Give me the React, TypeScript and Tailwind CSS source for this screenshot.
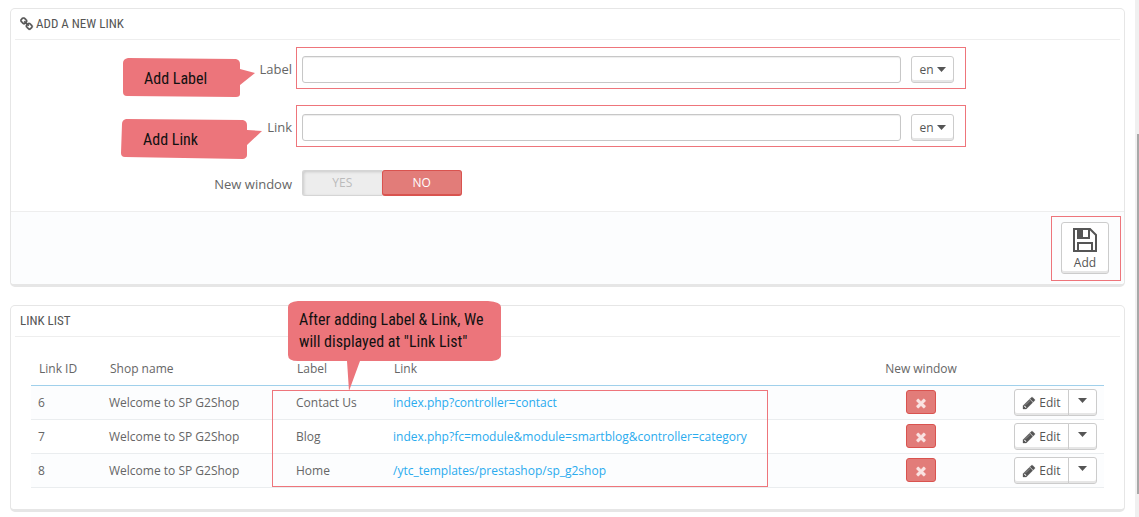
import type { ReactNode } from 'react';

const links = [
  { id: 6, shop: 'Welcome to SP G2Shop', label: 'Contact Us', url: 'index.php?controller=contact' },
  { id: 7, shop: 'Welcome to SP G2Shop', label: 'Blog', url: 'index.php?fc=module&module=smartblog&controller=category' },
  { id: 8, shop: 'Welcome to SP G2Shop', label: 'Home', url: '/ytc_templates/prestashop/sp_g2shop' },
];

const icons = {
  link: 'M1456 1216q0-40-28-68l-208-208q-28-28-68-28-42 0-72 32 3 3 19 18.5t21.5 21.5 15 19 13 25.5 3.5 27.5q0 40-28 68t-68 28q-15 0-27.5-3.5t-25.5-13-19-15-21.5-21.5-18.5-19q-33 31-33 73 0 40 28 68l206 207q27 27 68 27 40 0 68-26l147-146q28-28 28-67zm-703-705q0-40-28-68l-206-207q-28-28-68-28-39 0-68 27l-147 146q-28 28-28 67 0 40 28 68l208 208q27 27 68 27 42 0 72-31-3-3-19-18.5t-21.5-21.5-15-19-13-25.5-3.5-27.5q0-40 28-68t68-28q15 0 27.5 3.5t25.5 13 19 15 21.5 21.5 18.5 19q33-31 33-73zm895 705q0 120-85 203l-147 146q-83 83-203 83-121 0-204-85l-206-207q-83-83-83-203 0-123 88-209l-88-88q-86 88-208 88-120 0-204-84l-208-208q-84-84-84-204t85-203l147-146q83-83 203-83 121 0 204 85l206 207q83 83 83 203 0 123-88 209l88 88q86-88 208-88 120 0 204 84l208 208q84 84 84 204z',
  pencil: 'M491 1536l91-91-235-235-91 91v107h128v128h107zm523-928q0-22-22-22-10 0-17 7l-542 542q-7 7-7 17 0 22 22 22 10 0 17-7l542-542q7-7 7-17zm-54-192l416 416-832 832h-416v-416zm683 96q0 53-37 90l-166 166-416-416 166-165q36-38 90-38 53 0 91 38l235 234q37 39 37 91z',
  times: 'M1490 1322q0 40-28 68l-136 136q-28 28-68 28t-68-28l-294-294-294 294q-28 28-68 28t-68-28l-136-136q-28-28-28-68t28-68l294-294-294-294q-28-28-28-68t28-68l136-136q28-28 68-28t68 28l294 294 294-294q28-28 68-28t68 28l136 136q28 28 28 68t-28 68l-294 294 294 294q28 28 28 68z',
};

const Icon = ({ name, className }: { name: keyof typeof icons; className: string }) => (
  <svg viewBox="0 0 1792 1792" fill="currentColor" stroke="currentColor" strokeWidth="40" className={className} aria-hidden="true">
    <path d={icons[name]} />
  </svg>
);

const Caret = () => (
  <svg viewBox="0 0 9 5" fill="currentColor" className="h-[5px] w-[9px]" aria-hidden="true">
    <path d="M0 0h9L4.5 5z" />
  </svg>
);

const SaveIcon = () => (
  <svg viewBox="0 0 24 24" fill="none" stroke="currentColor" strokeWidth="2" className="size-6" aria-hidden="true">
    <path d="M1 1h16l6 6v16H1z" />
    <path d="M5 1v9h11V1M5 23v-8h14v8" />
    <path d="M5 1h5v9H5z" fill="currentColor" stroke="none" />
  </svg>
);

const Panel = ({ title, icon, children }: { title: string; icon?: ReactNode; children: ReactNode }) => (
  <section className="rounded-[5px] border border-b-[3px] border-[#e6e6e6] bg-white">
    <h2 className="mx-1 flex h-[31px] items-center gap-[2px] border-b border-[#eee] px-[5px] font-['Roboto_Condensed','Liberation_Sans',sans-serif] text-[13px] text-[#555] uppercase">
      {icon}
      {title}
    </h2>
    {children}
  </section>
);

const buttonStyle = 'border border-[#ccc] bg-white shadow-[inset_0_-2px_0_#e6e6e6] text-[#555]';
const calloutText = "absolute font-['Roboto_Condensed','Liberation_Sans',sans-serif] text-base leading-[22px] whitespace-nowrap text-[#111]";

const LangField = ({ id, label, children }: { id: string; label: string; children: ReactNode }) => (
  <div className="relative flex items-center">
    <label htmlFor={id} className="w-[281px] shrink-0 pt-[2px] text-right">{label}</label>
    <div className="mr-[158px] ml-1 flex flex-1 gap-[10px] border border-[#ee757b] pt-2 pr-[11px] pb-[5px] pl-[5px]">
      <input
        id={id}
        type="text"
        className="h-[27px] min-w-0 flex-1 rounded-[3px] border border-[#c7c7c7] bg-white px-2 shadow-[inset_0_1px_1px_rgba(0,0,0,0.075)] outline-none"
      />
      <button type="button" className={`flex h-[27px] w-[43px] items-center justify-center gap-[3px] rounded-[3px] text-xs ${buttonStyle}`}>
        en
        <Caret />
      </button>
    </div>
    {children}
  </div>
);

const AddLinkPanel = () => (
  <Panel title="Add a new link" icon={<Icon name="link" className="size-[14px]" />}>
    <form>
      <div className="flex flex-col gap-4 pt-[7px] pb-[15px]">
        <LangField id="label" label="Label">
          <div className="absolute top-[11px] left-28 h-10 w-[132px]">
            <svg viewBox="0 0 132 40" fill="#ec757b" className="size-full" aria-hidden="true">
              <path d="M5 0L113 1Q117 2 117 6V11L132 15L117 27V36Q117 39 113 39L4 38Q0 38 0 34L0 5Q0 1 5 0z" />
            </svg>
            <span className={`${calloutText} top-[10px] left-[21px]`}>Add Label</span>
          </div>
        </LangField>
        <LangField id="link" label="Link">
          <div className="absolute top-[14px] left-[110px] h-10 w-[142px]">
            <svg viewBox="0 0 142 40" fill="#ec757b" className="size-full" aria-hidden="true">
              <path d="M5 0L122 1Q126 2 126 6V11L141 12L126 26V36Q126 39 122 40L4 38Q0 38 0 34L1 5Q1 1 5 0z" />
            </svg>
            <span className={`${calloutText} top-[10px] left-[22px]`}>Add Link</span>
          </div>
        </LangField>
        <div role="radiogroup" aria-labelledby="new-window" className="flex items-center pt-[7px]">
          <span id="new-window" className="w-[281px] shrink-0 pt-[2px] text-right">New window</span>
          <div className="ml-[10px] flex h-[26px] w-40 rounded-[3px] bg-[#ededed] text-xs">
            <label className="flex flex-1 items-center justify-center rounded-l-[3px] border border-r-0 border-[#d5d5d5] text-[#bbb] shadow-[inset_1px_1px_3px_rgba(0,0,0,0.15)]">
              <input type="radio" name="new_window" value="1" className="sr-only" />
              YES
            </label>
            <label className="flex flex-1 items-center justify-center rounded-[3px] border border-b-2 border-[#d9534f] bg-[#e27c79] text-white">
              <input type="radio" name="new_window" value="0" defaultChecked className="sr-only" />
              NO
            </label>
          </div>
        </div>
      </div>
      <div className="flex justify-end rounded-b-[3px] border-t border-[#eee] bg-[#fcfdfe] pt-1 pr-[3px] pb-[3px]">
        <div className="border border-[#ee757b] pt-[5px] pr-[11px] pb-[6px] pl-[9px]">
          <button type="button" className={`flex h-[52px] w-12 flex-col items-center rounded-[3px] pt-[5px] text-xs ${buttonStyle}`}>
            <SaveIcon />
            <span className="pt-[3px]">Add</span>
          </button>
        </div>
      </div>
    </form>
  </Panel>
);

const LinkListPanel = () => (
  <Panel title="Link list">
    <div className="relative mx-5 pt-[14px] pb-[21px]">
      <table className="w-full table-fixed border-collapse text-left text-xs">
        <thead>
          <tr className="h-[34px] border-b border-[#a0d0eb]">
            <th className="w-[71px] px-2 pt-[2px] font-normal">Link ID</th>
            <th className="w-[187px] px-2 pt-[2px] font-normal">Shop name</th>
            <th className="w-[97px] px-2 pt-[2px] font-normal">Label</th>
            <th className="px-2 pt-[2px] font-normal">Link</th>
            <th className="w-[86px] pt-[2px] text-center font-normal">New window</th>
            <th className="w-[140px]" aria-label="Actions" />
          </tr>
        </thead>
        <tbody>
          {links.map((link) => (
            <tr key={link.id} className="h-[34px] border-b border-[#eaedef] odd:bg-[#fcfdfe]">
              <td className="px-[7px] pt-[2px]">{link.id}</td>
              <td className="px-[7px] pt-[2px]">{link.shop}</td>
              <td className="px-[7px] pt-[2px]">{link.label}</td>
              <td className="px-[7px] pt-[2px]">
                <a href={link.url} className="text-[#2aabee]">{link.url}</a>
              </td>
              <td>
                <button
                  type="button"
                  aria-label="Disabled"
                  className="mx-auto flex h-6 w-[30px] items-center justify-center rounded-[3px] border border-[#d9534f] bg-[#e27c79] pt-[2px] text-[#fae3e2]"
                >
                  <Icon name="times" className="size-[14px]" />
                </button>
              </td>
              <td>
                <div className="flex justify-end pr-[7px]">
                  <button type="button" className={`flex h-[27px] w-[55px] items-center justify-center gap-[3px] rounded-l-[3px] pt-px ${buttonStyle}`}>
                    <Icon name="pencil" className="size-[14px]" />
                    Edit
                  </button>
                  <button type="button" aria-label="More actions" className={`-ml-px flex h-[27px] w-[29px] items-center justify-center rounded-r-[3px] pb-[3px] ${buttonStyle}`}>
                    <Caret />
                  </button>
                </div>
              </td>
            </tr>
          ))}
        </tbody>
      </table>

      {/* highlighted label and link cells */}
      <div className="pointer-events-none absolute top-[53px] left-[241px] h-[97px] w-[496px] border border-[#ee757b]" />
      <div className="absolute -top-9 left-[257px] h-[90px] w-[213px]">
        <svg viewBox="0 0 213 90" fill="#ec757b" className="size-full" aria-hidden="true">
          <path d="M10 0H200Q213 1 213 6V54Q213 59 204 60H72L61 90L59 60H10Q0 60 0 54V6Q0 1 10 0z" />
        </svg>
        <p className={`${calloutText} top-2 left-[11px]`}>
          After adding Label &amp; Link, We
          <br />
          will displayed at "Link List"
        </p>
      </div>
    </div>
  </Panel>
);

export default function App() {
  return (
    <div className="flex min-h-screen bg-white font-['Open_Sans',sans-serif] text-[13px] leading-4 text-[#666]">
      <main className="flex min-w-0 flex-1 flex-col gap-[18px] pt-2 pr-[10px] pb-1 pl-[10px]">
        <AddLinkPanel />
        <LinkListPanel />
      </main>
      <div className="w-1 bg-[#f0f0f0] pt-[134px] pl-[2px]">
        <div className="h-[360px] bg-[#a8a8a8]" />
      </div>
    </div>
  );
}
